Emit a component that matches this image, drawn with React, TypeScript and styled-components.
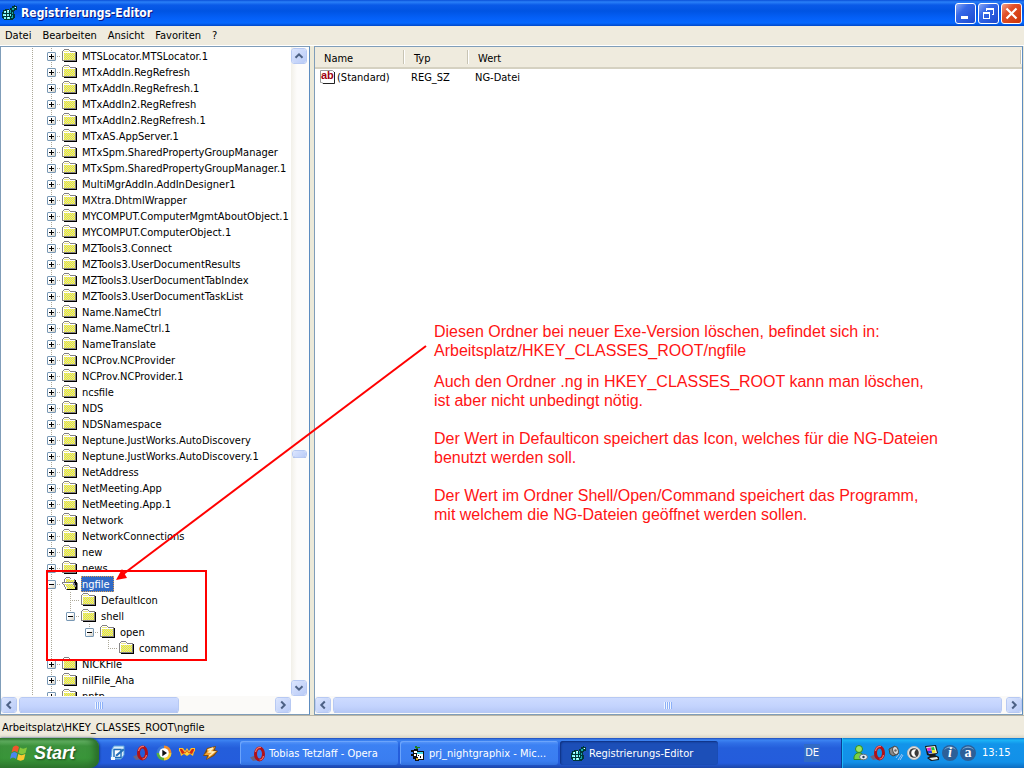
import React from "react";
import styled, { createGlobalStyle, css } from "styled-components";

const UI = `"DejaVu Sans Condensed", "Noto Sans", sans-serif`;

const GlobalStyle = createGlobalStyle`
  * { box-sizing: border-box; }
  html, body, #root { height: 100%; }
  body {
    margin: 0;
    overflow: hidden;
    background: #ece9d8;
    color: #000;
    font: 11px/18px ${UI};
  }
  button { margin: 0; padding: 0; border: 0; background: none; color: inherit; font: inherit; }
  ul { margin: 0; padding: 0; list-style: none; }
  svg { display: block; flex: none; }
`;

const Desktop = styled.div`
  position: relative;
  display: flex;
  flex-direction: column;
  height: 100vh;
  overflow: hidden;
`;

/* ---------- window frame ---------- */

const TitleBar = styled.header`
  display: flex;
  align-items: center;
  flex: none;
  height: 26px;
  padding: 0 2px 0 1px;
  background: linear-gradient(#0a4fd8 0, #2a80f8 2px, #0a5ae8 5px, #0054e3 11px, #0460f8 18px, #0668fe 23px, #0048c8 26px);
`;

const Title = styled.h1`
  flex: 1;
  margin: 0 0 0 4px;
  color: #fff;
  font: bold 12px/18px ${UI};
  text-shadow: 1px 1px 0 #0a1883;
`;

const WindowButtons = styled.div`
  display: flex;
  gap: 2px;
`;

const WindowButton = styled.button<{ $close?: boolean }>`
  display: grid;
  place-items: center;
  width: 21px;
  height: 21px;
  border: 1px solid #fff;
  border-radius: 3px;
  background: ${(p) =>
    p.$close
      ? "linear-gradient(135deg, #f0a48c, #e2502a 35%, #cc3508)"
      : "linear-gradient(135deg, #8aa8f5, #3568e8 35%, #1c49cf)"};
`;

const MenuBar = styled.nav`
  display: flex;
  align-items: flex-start;
  flex: none;
  height: 20px;
  padding: 1px 0 0 5px;
  gap: 11px;
  border-bottom: 1px solid #fff;
  background: #efebde;
`;

const MenuButton = styled.button`
  height: 18px;
`;

const Panes = styled.main`
  display: grid;
  grid-template-columns: 310px minmax(0, 1fr);
  gap: 4px;
  flex: 1;
  min-height: 0;
  padding-right: 1px;
`;

const Pane = styled.section`
  display: flex;
  flex-direction: column;
  min-width: 0;
  min-height: 0;
  border: 1px solid #7f9db9;
  border-right-color: #5d8cc0;
  background: #fff;
`;

const PaneBody = styled.div`
  display: flex;
  flex: 1;
  min-height: 0;
`;

/* ---------- scrollbars ---------- */

const HorizontalBar = styled.div<{ $corner?: boolean }>`
  display: flex;
  flex: none;
  height: 18px;
  margin-right: ${(p) => (p.$corner ? 18 : 0)}px;
  padding-top: 1px;
  background: #fbfaf8;
`;

const VerticalBar = styled.div`
  display: flex;
  flex-direction: column;
  align-items: center;
  flex: none;
  width: 18px;
  padding: 1px 2px 0 0;
  background: linear-gradient(90deg, #f2f0e9, #fdfcfb 6px);
`;

const scrollPiece = css`
  border: 1px solid #fff;
  border-radius: 3px;
  outline: 1px solid #b7c9f3;
  outline-offset: -1px;
  background: linear-gradient(135deg, #dbe5fe, #b9cbf7);
  background-clip: padding-box;
`;

const ScrollButton = styled.button`
  ${scrollPiece}
  display: grid;
  place-items: center;
  flex: none;
  width: 16px;
  height: 16px;
`;

const HTrack = styled.div`
  display: flex;
  flex: 1;
  height: 16px;
`;

const HThumb = styled.div<{ $width: string }>`
  ${scrollPiece}
  display: grid;
  place-items: center;
  width: ${(p) => p.$width};
  margin-left: 2px;
  background: linear-gradient(#cddbff, #c3d3fd 60%, #b6c8f6);
  border-bottom-color: #9fb4e4;
`;

const VTrack = styled.div`
  display: grid;
  grid-template-rows: 386fr 8px 222fr;
  flex: 1;
  width: 15px;
`;

const VThumb = styled.div`
  ${scrollPiece}
  grid-row: 2;
  border-bottom-color: #8ea6d8;
`;

const Grip = styled.span`
  width: 8px;
  height: 7px;
  background: repeating-linear-gradient(90deg, #eef4fe 0 1px, #8cb0f8 1px 2px);
`;

const Chevron = ({ turn = 0 }: { turn?: number }) => (
  <svg width="10" height="10" viewBox="0 0 10 10">
    <path d="M1.500 6.800 5 3.300 8.500 6.800" fill="none" stroke="#4d6185" strokeWidth="2" transform={`rotate(${turn} 5 5)`} />
  </svg>
);

/* ---------- tree ---------- */

const dottedColumn = "repeating-linear-gradient(#aca899 0 1px, transparent 1px 2px)";
const dottedRow = "repeating-linear-gradient(90deg, #aca899 0 1px, transparent 1px 2px)";

const TreeList = styled.ul`
  flex: 1;
  min-width: 0;
  padding-top: 1px;
  overflow: hidden;
`;

const TreeRow = styled.li`
  display: flex;
  height: 16px;
  padding-left: 22px;
  white-space: nowrap;
`;

const Cell = styled.span<{ $line: Line }>`
  display: grid;
  align-items: center;
  justify-items: center;
  flex: none;
  width: 19px;
  height: 16px;
  background-repeat: no-repeat;
  background-image: ${(p) => (p.$line === "none" ? "none" : dottedColumn)}${(p) =>
    p.$line === "pass" || p.$line === "none" ? "" : `, ${dottedRow}`};
  background-position: 9px 0, 9px 8px;
  background-size: 1px ${(p) => (p.$line === "end" ? "9px" : "16px")}, 10px 1px;
`;

type Line = "none" | "pass" | "tee" | "end";

const Toggle = styled.button`
  width: 9px;
  height: 9px;
  border: 1px solid #7898b5;
  border-radius: 1px;
  background: linear-gradient(135deg, #fff, #fff 40%, #d2cdc0);
`;

const NodeLabel = styled.span<{ $selected?: boolean }>`
  margin-left: 3px;
  padding: 0 4px 0 1px;
  ${(p) =>
    p.$selected &&
    css`
      background: #316ac5;
      color: #fff;
      outline: 1px dotted #e0a050;
      outline-offset: -1px;
    `}
`;

const FolderArt = styled.svg`
  margin-left: 1px;
`;

const FolderIcon = ({ open }: { open?: boolean }) => (
  <FolderArt width="16" height="16" viewBox="0 0 16 16" shapeRendering="crispEdges">
    {open ? (
      <>
        <path d="M2 3h1V2h1V1h4v1h1v1h4v1h1v2h1v1h1v7H4v-1H3v-2H2V9H1V8H0V6h2z" fill="#848284" />
        <path d="M4 2h4v1H4zM3 3h9v3H3zM1 7h10v1l2 5H4V11H3V9H2V8H1z" fill="#fff" />
        <path d="M4 3h4v1h4v2H4z" fill="url(#folder-dither)" />
        <path d="M2 8h9v1h1v2h1v2H5v-2H4V9H2z" fill="url(#folder-dither)" />
        <path d="M13 4h1v2h1v8H5v-1h8v-2h1V9h-1V7h-1V6h1z" fill="#000" />
      </>
    ) : (
      <>
        <path d="M14 4h1v10H2v-1h12z" fill="#000" />
        <path d="M0 3h1V2h1V1h5v1h1v1h6v10H0z" fill="#848284" />
        <path d="M2 2h5v1H2zM1 3h7v1h5v8H1z" fill="#fff" />
        <path d="M2 5h11v7H2z" fill="url(#folder-dither)" />
        <path d="M2 3h5v1H2z" fill="#efe98a" />
      </>
    )}
  </FolderArt>
);

interface NodeData {
  label: string;
  lines: Line[];
  toggle?: "+" | "-";
  open?: boolean;
}

const closed = (label: string): NodeData => ({ label, lines: ["pass", "tee"], toggle: "+" });

const nodes: NodeData[] = [
  ...[
    "MTSLocator.MTSLocator.1",
    "MTxAddIn.RegRefresh",
    "MTxAddIn.RegRefresh.1",
    "MTxAddIn2.RegRefresh",
    "MTxAddIn2.RegRefresh.1",
    "MTxAS.AppServer.1",
    "MTxSpm.SharedPropertyGroupManager",
    "MTxSpm.SharedPropertyGroupManager.1",
    "MultiMgrAddIn.AddInDesigner1",
    "MXtra.DhtmlWrapper",
    "MYCOMPUT.ComputerMgmtAboutObject.1",
    "MYCOMPUT.ComputerObject.1",
    "MZTools3.Connect",
    "MZTools3.UserDocumentResults",
    "MZTools3.UserDocumentTabIndex",
    "MZTools3.UserDocumentTaskList",
    "Name.NameCtrl",
    "Name.NameCtrl.1",
    "NameTranslate",
    "NCProv.NCProvider",
    "NCProv.NCProvider.1",
    "ncsfile",
    "NDS",
    "NDSNamespace",
    "Neptune.JustWorks.AutoDiscovery",
    "Neptune.JustWorks.AutoDiscovery.1",
    "NetAddress",
    "NetMeeting.App",
    "NetMeeting.App.1",
    "Network",
    "NetworkConnections",
    "new",
    "news",
  ].map(closed),
  { label: "ngfile", lines: ["pass", "tee"], toggle: "-", open: true },
  { label: "DefaultIcon", lines: ["pass", "pass", "tee"] },
  { label: "shell", lines: ["pass", "pass", "end"], toggle: "-" },
  { label: "open", lines: ["pass", "pass", "none", "end"], toggle: "-" },
  { label: "command", lines: ["pass", "pass", "none", "none", "end"] },
  closed("NICKFile"),
  closed("nilFile_Aha"),
  closed("nntp"),
];

/* The column below a node without further siblings stays blank. */
const lineFor = (node: NodeData, i: number): Line =>
  i === 2 && (node.label === "open" || node.label === "command") ? "none" : node.lines[i];

const TreeNode = ({ node }: { node: NodeData }) => (
  <TreeRow>
    {node.lines.map((_, i) => (
      <Cell key={i} $line={lineFor(node, i)}>
        {node.toggle && i === node.lines.length - 1 && (
          <Toggle aria-label={`${node.toggle === "+" ? "Expand" : "Collapse"} ${node.label}`}>
            <svg width="7" height="7" viewBox="0 0 7 7" shapeRendering="crispEdges">
              <path d={node.toggle === "+" ? "M1 3h5v1H1zM3 1h1v5H3z" : "M1 3h5v1H1z"} />
            </svg>
          </Toggle>
        )}
      </Cell>
    ))}
    <FolderIcon open={node.open} />
    <NodeLabel $selected={node.open}>{node.label}</NodeLabel>
  </TreeRow>
);

/* ---------- value list ---------- */

const ValueTable = styled.table`
  width: 100%;
  height: 38px;
  table-layout: fixed;
  border-collapse: collapse;
  text-align: left;
`;

const HeadCell = styled.th<{ $width?: number }>`
  width: ${(p) => (p.$width ? `${p.$width}px` : "auto")};
  height: 21px;
  padding: 2px 0 0 9px;
  border-bottom: 2px solid #d5d1c1;
  background:
    linear-gradient(#c8c4b4, #c8c4b4) right 1px top 3px / 1px 14px no-repeat,
    linear-gradient(#fff, #fff) right 0 top 3px / 1px 14px no-repeat,
    #efebde;
  font-weight: normal;
  line-height: 17px;
`;

const ValueCell = styled.td`
  height: 17px;
  padding: 0 0 0 6px;
`;

const ValueName = styled.span`
  display: flex;
  margin-left: -2px;
  gap: 1px;
`;

const StringIcon = () => (
  <svg width="17" height="16" viewBox="0 0 17 16">
    <path d="M1.500 1.500h12l2 2v11h-11l-2-1h-1z" fill="#fff" stroke="#9a9a9a" />
    <path d="M15.500 3v11.500H4" fill="none" stroke="#222" />
    <text x="2" y="10" fontFamily="Liberation Sans" fontWeight="bold" fontSize="11" fill="#a00010">ab</text>
  </svg>
);

/* ---------- annotations ---------- */

const Marks = styled.svg`
  position: absolute;
  left: 0;
  top: 0;
  pointer-events: none;
`;

const Notes = styled.aside`
  position: absolute;
  left: 434px;
  top: 322px;
  color: #ff1414;
  font: 16px/19px "Liberation Sans", Arial, sans-serif;
  white-space: nowrap;
`;

const Note = styled.p<{ $gap?: number }>`
  margin: 0 0 ${(p) => p.$gap ?? 19}px;
`;

/* ---------- status and task bar ---------- */

const StatusBar = styled.footer`
  flex: none;
  height: 23px;
  padding: 3px 2px 0;
  border-top: 1px solid #b9b5a6;
  background: linear-gradient(#efebde 18px, #d9d5c6);
`;

const TaskBar = styled.footer`
  display: flex;
  flex: none;
  height: 30px;
  color: #fff;
  background: linear-gradient(#1f4ab8 0, #3d84f2 2px, #2f6fe6 5px, #245edb 10px, #245cdc 25px, #1c46a8 30px);
`;

const StartButton = styled.button`
  display: flex;
  align-items: center;
  width: 99px;
  gap: 5px;
  padding-left: 10px;
  border-radius: 0 9px 9px 0;
  color: #fff;
  font: italic bold 18px/28px "Liberation Sans", Arial, sans-serif;
  text-shadow: 1px 1px 2px #1d4a1d;
  background: linear-gradient(#2e7a2e 0, #65b365 3px, #3c923c 8px, #399539 20px, #2f7a2f 30px);
  box-shadow: inset -5px 0 6px #2a6e2a, 1px 0 2px #153f9a;
`;

const QuickLaunch = styled.div`
  display: flex;
  align-items: center;
  width: 141px;
  padding-left: 11px;
  gap: 7px;
`;

const IconButton = styled.button`
  width: 16px;
  height: 16px;
`;

const Tasks = styled.div`
  display: flex;
  flex: 1;
  gap: 2px;
  padding: 3px 0;
`;

const TaskButton = styled.button<{ $active?: boolean }>`
  display: flex;
  align-items: center;
  width: 158px;
  padding: 1px 10px 0;
  gap: 3px;
  border-radius: 3px;
  white-space: nowrap;
  background: ${(p) => (p.$active ? "#1c4fb8" : "linear-gradient(#5a98fa, #3c81f3 4px, #3a7df0 20px, #3170dd)")};
  box-shadow: ${(p) => (p.$active ? "inset 1px 1px 2px #0d2f7d" : "inset 1px 1px 0 #6ba4fb")};
`;

const Language = styled.span`
  align-self: center;
  margin-right: 21px;
  padding: 0 1px;
  background: #316ac5;
`;

const Tray = styled.div`
  display: flex;
  align-items: center;
  padding: 0 13px 0 10px;
  gap: 2px;
  border-left: 1px solid #0a3c94;
  background: linear-gradient(#0f74cc 0, #1cb4f6 2px, #1294ea 6px, #1290e8 24px, #0d6cc0 30px);
  box-shadow: inset 1px 0 0 #1bb9f8;
`;

const Clock = styled.time`
  width: 29px;
  margin-left: 4px;
`;

/* ---------- icons ---------- */

const RegeditIcon = () => (
  <svg width="16" height="16" viewBox="0 0 16 16" shapeRendering="crispEdges">
    <path d="M2 5h2V4h4v1h1V3h2V1h2V0h1v1h2v4h-2v1h-1v3h1v3l-3 3H3l-1-2H1V7h1z" fill="#003838" />
    <path d="M3 6h2v2H3zM6 5h2v3H6zM2 9h3v2H2zM6 9h2v2H6zM3 12h2v2H3zM6 12h3v2H6zM9 9h1v2H9z" fill="#7ff4f4" />
    <path d="M9 5h1v3H9zM11 3h2v2h-2zM11 7h1v2h-1zM11 10h1v3h-1zM13 2h1v1h-1zM10 12h1v1h-1z" fill="#18a8a8" />
    <path d="M4 6h1v1H4zM7 5h1v1H7zM4 10h1v1H4zM14 2h1v1h-1zM7 12h1v1H7z" fill="#fff" />
  </svg>
);

const WindowsFlag = () => (
  <svg width="19" height="18" viewBox="0 0 19 18">
    <path d="M3 3c2-2 4-2 6 0L7.500 8.500c-2-2-4-2-6 0z" fill="#f0562c" />
    <path d="M10 3.500c2 1.500 4 1.500 7 0L15.500 9c-2 1.500-5 1.500-7 0z" fill="#86c83c" />
    <path d="M1.300 9.500c2-2 4-2 6 0L6 15c-2-2-4-2-6 0z" fill="#4a86f0" />
    <path d="M8.300 10c2 1.500 4 1.500 7 0L14 15.500c-2 1.500-5 1.500-7 0z" fill="#fcc830" />
  </svg>
);

const OperaIcon = () => (
  <svg width="16" height="16" viewBox="0 0 16 16">
    <path d="M0 11.500 6 9l3 5-6 1z" fill="#6a6484" />
    <ellipse cx="9.500" cy="8" rx="4" ry="6" fill="none" stroke="#b01018" strokeWidth="3" />
    <path d="M5.500 6c.5-3.500 3-5 5.500-4.500M13.500 10c-.5 2.500-2 4-4 4" fill="none" stroke="#ee7468" strokeWidth="1.200" />
  </svg>
);

const DesktopIcon = () => (
  <svg width="16" height="16" viewBox="0 0 16 16">
    <path d="M1 14 2 4l2-3h10v9l-3 4z" fill="#d8ecfb" stroke="#5aa4dc" />
    <path d="M4 4.500h7v8H4z" fill="#fff" stroke="#1c6cb8" strokeWidth="1.400" />
    <path d="m6 9.500 7-6 1.500 1.500-7 6-2 .5z" fill="#2470b8" />
    <path d="M1 12h4v3H1z" fill="#f0f8fe" />
  </svg>
);

const PlayerIcon = () => (
  <svg width="16" height="16" viewBox="0 0 16 16">
    <path d="M8 8V.5A7.500 7.500 0 0 1 15.500 8z" fill="#f08a28" />
    <path d="M8 8h7.500A7.500 7.500 0 0 1 8 15.500z" fill="#f5cc30" />
    <path d="M8 8v7.500A7.500 7.500 0 0 1 .5 8z" fill="#58b040" />
    <path d="M8 8H.5A7.500 7.500 0 0 1 8 .5z" fill="#3a78d8" />
    <circle cx="8" cy="8" r="4.800" fill="#fff" />
    <path d="M6.300 4.800v6.400L11 8z" fill="#111" />
  </svg>
);

const CrownIcon = () => (
  <svg width="16" height="16" viewBox="0 0 16 16">
    <path d="M0 3h4l2 3 2-3 2 3 2-3h4v3l-1 1-1 4-3-2-3 2-3-2-3 2-1-4-1-1z" fill="#fcc028" />
    <path d="M1 4h2l3 4 2-3 2 3 3-4h2v1l-2 4-3-1-2 1-2-1-3 1-2-4z" fill="#d42814" />
    <path d="m6 9 2-3 2 3-2 1z" fill="#fcd83c" />
  </svg>
);

const WinampIcon = () => (
  <svg width="16" height="16" viewBox="0 0 16 16">
    <path d="m5 3 9-2-1 4 3 1-4 5-8 4 1-4H1l2-4z" fill="#7c4c10" />
    <path d="m5 4 8-2-2 4h4l-4 4-6 4 2-4H2l3-3z" fill="#f4a030" />
    <path d="m6 5 5-2-4 4h5l-5 4" fill="none" stroke="#fff0c0" strokeWidth="1.400" />
  </svg>
);

const VisualStudioIcon = () => (
  <svg width="16" height="16" viewBox="0 0 16 16" shapeRendering="crispEdges">
    <path d="M1 4h3V3h4v2h6v9H9v1H5v-2H3v-3H1V8h2V6H1z" fill="#101010" />
    <path d="M4 5h3v2H4zM7 7h6v6H8v-2H7zM4 8h2v2H4z" fill="#fff" />
    <path d="M7 6h6v2H7z" fill="#48d8e8" />
    <path d="M10 10h1v2h-1zM8 9h1v1H8z" fill="#101010" />
    <path d="M5 0h2v1h1v2H6V2H5zM8 1h2v1H8z" fill="#208020" />
    <path d="M6 12h2v2H6z" fill="#d8a828" />
  </svg>
);

const UserIcon = () => (
  <svg width="16" height="16" viewBox="0 0 16 16">
    <circle cx="7" cy="4" r="3.500" fill="#9ce460" stroke="#2e8a20" />
    <path d="M2 14.500c-1-9 11-9 10 0z" fill="#78d048" stroke="#2e8a20" />
    <ellipse cx="11.500" cy="12" rx="4" ry="2.800" fill="#e8eef4" stroke="#607080" />
    <circle cx="11.500" cy="12" r="1.200" fill="#203850" />
  </svg>
);

const SpeakerIcon = () => (
  <svg width="16" height="16" viewBox="0 0 16 16">
    <path d="M1 4 7 1l3 8-5 2-3-2z" fill="#8a8a8a" stroke="#444" />
    <ellipse cx="7.500" cy="5.500" rx="2.800" ry="4" fill="#d8d8d8" stroke="#555" transform="rotate(-15 7.500 5.500)" />
    <circle cx="7.500" cy="5.500" r="1.200" fill="#666" />
    <path d="m8 13 3-4m-1 6 4-6m-2 6 3-5" stroke="#9cc4f4" fill="none" />
  </svg>
);

const CrescentIcon = () => (
  <svg width="16" height="16" viewBox="0 0 16 16">
    <circle cx="8" cy="8" r="6.500" fill="#e8e8e8" stroke="#b8b8b8" />
    <circle cx="8" cy="8" r="4.800" fill="#3a3a3a" />
    <path d="M10.500 4.500a3.800 3.800 0 1 0 0 7 4 4 0 0 1 0-7z" fill="#fff" />
  </svg>
);

const DisplayIcon = () => (
  <svg width="16" height="16" viewBox="0 0 16 16">
    <path d="m1 1 11-1 2 8-3 2 4 2v3l-8 1-4-3 3-2-3-1z" fill="#181818" />
    <path d="m2 2 9-1 2 7-8 1zM5 13l8-1 1 2-6 1z" fill="#f0f0e8" />
    <path d="m3 3 4-.5.700 3-4 .5z" fill="#f020d0" />
    <path d="m7 2.500 3-.5.800 3-3.100.5z" fill="#20c040" />
    <path d="m3.700 6 4-.5.600 2.500-4 .5z" fill="#2040e0" />
    <path d="m7.700 5.500 3.300-.5.700 2.500-3.400.5z" fill="#f4e820" />
  </svg>
);

const LetterIcon = ({ letter, italic }: { letter: string; italic?: boolean }) => (
  <svg width="16" height="16" viewBox="0 0 16 16">
    <circle cx="8" cy="8" r="8" fill="#2c6098" />
    <path d="M2 5a7 7 0 0 1 12 0 9 9 0 0 0-12 0z" fill="#7ca8d0" />
    <text
      x="8"
      y="12"
      textAnchor="middle"
      fontFamily="Liberation Serif"
      fontWeight="bold"
      fontStyle={italic ? "italic" : "normal"}
      fontSize="14"
      fill="#fff"
    >
      {letter}
    </text>
  </svg>
);

const menus = ["Datei", "Bearbeiten", "Ansicht", "Favoriten", "?"];

const quickLaunch = [
  { name: "Desktop anzeigen", icon: <DesktopIcon /> },
  { name: "Opera", icon: <OperaIcon /> },
  { name: "Media Player", icon: <PlayerIcon /> },
  { name: "IrfanView", icon: <CrownIcon /> },
  { name: "Winamp", icon: <WinampIcon /> },
];

const Definitions = styled.svg`
  position: absolute;
`;

export default function App() {
  return (
    <Desktop>
      <GlobalStyle />
      <Definitions width="0" height="0">
        <pattern id="folder-dither" width="2" height="2" patternUnits="userSpaceOnUse">
          <path d="M0 0h2v2H0z" fill="#cecfce" />
          <path d="M1 0h1v1H1zM0 1h1v1H0z" fill="#ffff00" />
        </pattern>
      </Definitions>

      <TitleBar>
        <RegeditIcon />
        <Title>Registrierungs-Editor</Title>
        <WindowButtons>
          <WindowButton aria-label="Minimieren">
            <svg width="15" height="15" viewBox="0 0 15 15">
              <path d="M3 10h7v3H3z" fill="#fff" />
            </svg>
          </WindowButton>
          <WindowButton aria-label="Wiederherstellen">
            <svg width="15" height="15" viewBox="0 0 15 15" fill="#fff" shapeRendering="crispEdges">
              <path d="M5 2h8v7h-2V8h1V4H6v1H5z" />
              <path fillRule="evenodd" d="M2 6h7v7H2zM3 8v4h5V8z" />
            </svg>
          </WindowButton>
          <WindowButton $close aria-label="Schließen">
            <svg width="15" height="15" viewBox="0 0 15 15">
              <path d="m2.500 2.500 10 10m0-10-10 10" stroke="#fff" strokeWidth="2.200" />
            </svg>
          </WindowButton>
        </WindowButtons>
      </TitleBar>

      <MenuBar>
        {menus.map((m) => (
          <MenuButton key={m}>{m}</MenuButton>
        ))}
      </MenuBar>

      <Panes>
        <Pane>
          <PaneBody>
            <TreeList>
              {nodes.map((n) => (
                <TreeNode key={n.label} node={n} />
              ))}
            </TreeList>
            <VerticalBar>
              <ScrollButton aria-label="Nach oben">
                <Chevron />
              </ScrollButton>
              <VTrack>
                <VThumb />
              </VTrack>
              <ScrollButton aria-label="Nach unten">
                <Chevron turn={180} />
              </ScrollButton>
            </VerticalBar>
          </PaneBody>
          <HorizontalBar $corner>
            <ScrollButton aria-label="Nach links">
              <Chevron turn={270} />
            </ScrollButton>
            <HTrack>
              <HThumb $width="160px">
                <Grip />
              </HThumb>
            </HTrack>
            <ScrollButton aria-label="Nach rechts">
              <Chevron turn={90} />
            </ScrollButton>
          </HorizontalBar>
        </Pane>

        <Pane>
          <PaneBody>
            <ValueTable>
              <thead>
                <tr>
                  <HeadCell $width={90}>Name</HeadCell>
                  <HeadCell $width={64}>Typ</HeadCell>
                  <HeadCell>Wert</HeadCell>
                </tr>
              </thead>
              <tbody>
                <tr>
                  <ValueCell>
                    <ValueName>
                      <StringIcon />
                      (Standard)
                    </ValueName>
                  </ValueCell>
                  <ValueCell>REG_SZ</ValueCell>
                  <ValueCell>NG-Datei</ValueCell>
                </tr>
              </tbody>
            </ValueTable>
          </PaneBody>
          <HorizontalBar>
            <ScrollButton aria-label="Nach links">
              <Chevron turn={270} />
            </ScrollButton>
            <HTrack>
              <HThumb $width="calc(100% - 6px)">
                <Grip />
              </HThumb>
            </HTrack>
            <ScrollButton aria-label="Nach rechts">
              <Chevron turn={90} />
            </ScrollButton>
          </HorizontalBar>
        </Pane>
      </Panes>

      <StatusBar>Arbeitsplatz\HKEY_CLASSES_ROOT\ngfile</StatusBar>

      <TaskBar>
        <StartButton>
          <WindowsFlag />
          Start
        </StartButton>
        <QuickLaunch>
          {quickLaunch.map((q) => (
            <IconButton key={q.name} aria-label={q.name}>
              {q.icon}
            </IconButton>
          ))}
        </QuickLaunch>
        <Tasks>
          <TaskButton>
            <OperaIcon />
            Tobias Tetzlaff - Opera
          </TaskButton>
          <TaskButton>
            <VisualStudioIcon />
            prj_nightgraphix - Mic...
          </TaskButton>
          <TaskButton $active>
            <RegeditIcon />
            Registrierungs-Editor
          </TaskButton>
        </Tasks>
        <Language>DE</Language>
        <Tray>
          <UserIcon />
          <OperaIcon />
          <SpeakerIcon />
          <CrescentIcon />
          <DisplayIcon />
          <LetterIcon letter="i" italic />
          <LetterIcon letter="a" />
          <Clock>13:15</Clock>
        </Tray>
      </TaskBar>

      <Marks width="430" height="670" viewBox="0 0 430 670">
        <path d="M47 571h159v89H47z" fill="none" stroke="#f00" strokeWidth="2" />
        <path d="M426 346 122 575" stroke="#f00" strokeWidth="2" />
        <path d="m116 580 6-11 5 9z" fill="#f00" />
      </Marks>

      <Notes>
        <Note $gap={12}>
          Diesen Ordner bei neuer Exe-Version löschen, befindet sich in:
          <br />
          Arbeitsplatz/HKEY_CLASSES_ROOT/ngfile
        </Note>
        <Note>
          Auch den Ordner .ng in HKEY_CLASSES_ROOT kann man löschen,
          <br />
          ist aber nicht unbedingt nötig.
        </Note>
        <Note>
          Der Wert in Defaulticon speichert das Icon, welches für die NG-Dateien
          <br />
          benutzt werden soll.
        </Note>
        <Note>
          Der Wert im Ordner Shell/Open/Command speichert das Programm,
          <br />
          mit welchem die NG-Dateien geöffnet werden sollen.
        </Note>
      </Notes>
    </Desktop>
  );
}
